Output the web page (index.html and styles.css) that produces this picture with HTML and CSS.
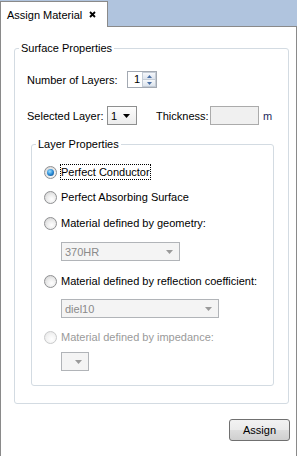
FILE: index.html
```html
<!DOCTYPE html>
<html lang="en">
<head>
    <meta charset="UTF-8">
    <meta name="viewport" content="width=device-width, initial-scale=1.0">
    <title>Assign Material</title>
    <link rel="stylesheet" href="styles.css">
</head>

<body>
    <div class="tabbar">
        <div class="tab">
            <span class="tab-title">Assign Material</span>
            <svg class="tab-close" width="7" height="7" viewBox="0 0 7 7">
                <path d="M1 1L6 6M6 1L1 6" stroke="#000" stroke-width="1.8" />
            </svg>
        </div>
        <div class="tabrest"></div>
    </div>

    <div class="panel">
        <fieldset class="group outer">
            <legend>Surface Properties</legend>

            <div class="row row-layers">
                <label class="lbl-layers">Number of Layers:</label>
                <div class="spinner">
                    <span class="spin-value">1</span>
                    <div class="spin-btns">
                        <span class="spin-btn">
                            <svg width="5" height="3" viewBox="0 0 5 3"><path d="M0 3L2.5 0L5 3Z" fill="#4a6fa5" /></svg>
                        </span>
                        <span class="spin-btn">
                            <svg width="5" height="3" viewBox="0 0 5 3"><path d="M0 0L2.5 3L5 0Z" fill="#4a6fa5" /></svg>
                        </span>
                    </div>
                </div>
            </div>

            <div class="row row-selected">
                <label class="lbl-selected">Selected Layer:</label>
                <div class="combo combo-layer">
                    <span>1</span>
                    <svg width="7" height="4" viewBox="0 0 7 4"><path d="M0 0L3.5 4L7 0Z" fill="#000" /></svg>
                </div>
                <label class="lbl-thick">Thickness:</label>
                <div class="textbox"></div>
                <span class="unit">m</span>
            </div>

            <fieldset class="group inner">
                <legend>Layer Properties</legend>

                <div class="option opt-first">
                    <span class="radio checked"></span>
                    <span class="opt-text focused">Perfect Conductor</span>
                </div>
                <div class="option opt-second">
                    <span class="radio"></span>
                    <span class="opt-text">Perfect Absorbing Surface</span>
                </div>
                <div class="option opt-third">
                    <span class="radio"></span>
                    <span class="opt-text">Material defined by geometry:</span>
                </div>
                <div class="combo disabled combo-geometry">
                    <span>370HR</span>
                    <svg width="7" height="4" viewBox="0 0 7 4"><path d="M0 0L3.5 4L7 0Z" fill="#9a9a9a" /></svg>
                </div>
                <div class="option opt-fourth">
                    <span class="radio"></span>
                    <span class="opt-text">Material defined by reflection coefficient:</span>
                </div>
                <div class="combo disabled combo-reflection">
                    <span>diel10</span>
                    <svg width="7" height="4" viewBox="0 0 7 4"><path d="M0 0L3.5 4L7 0Z" fill="#9a9a9a" /></svg>
                </div>
                <div class="option opt-fifth">
                    <span class="radio off"></span>
                    <span class="opt-text muted">Material defined by impedance:</span>
                </div>
                <div class="combo disabled combo-impedance">
                    <span></span>
                    <svg width="7" height="4" viewBox="0 0 7 4"><path d="M0 0L3.5 4L7 0Z" fill="#9a9a9a" /></svg>
                </div>
            </fieldset>
        </fieldset>

        <div class="actions">
            <button class="assign">Assign</button>
        </div>
    </div>
</body>

</html>
```

FILE: styles.css
```css
    body {
        margin: 0;
        width: 297px;
        height: 456px;
        overflow: hidden;
        background: #fff;
        font-family: 'Liberation Sans', Arial, sans-serif;
        font-size: 11px;
        color: #000;
    }

    /* tab strip */
    .tabbar {
        display: flex;
        height: 27px;
        background-color: #b0c4de;
    }

    .tab {
        display: flex;
        align-items: center;
        box-sizing: border-box;
        width: 108px;
        height: 26px;
        margin-top: 1px;
        padding: 0 11px 0 6px;
        border: 1px solid #8a8a8a;
        border-bottom: none;
        background-color: #fff;
    }

    .tab-title {
        line-height: 14px;
    }

    .tab-close {
        margin-left: auto;
    }

    .tabrest {
        flex: 1;
        border-bottom: 1px solid #8a8a8a;
    }

    /* page body */
    .panel {
        box-sizing: border-box;
        height: 429px;
        border-left: 1px solid #8a8a8a;
        border-right: 1px solid #8a8a8a;
        overflow: hidden;
    }

    .group {
        box-sizing: border-box;
        min-inline-size: 0;
        margin: 0;
        padding: 0;
        border: 1px solid #d3dbe2;
        border-radius: 3px;
    }

    .group legend {
        margin-left: 4px;
        padding: 0 2px;
        line-height: 13px;
    }

    .outer {
        width: 275px;
        margin: 15px 0 0 13px;
        padding-bottom: 17px;
    }

    .inner {
        width: 243px;
        margin: 13px 0 0 16px;
        padding-bottom: 14px;
    }

    .row {
        display: flex;
        align-items: center;
        padding-left: 12px;
    }

    .row-layers {
        height: 17px;
        margin-top: 16px;
    }

    .row-selected {
        height: 19px;
        margin-top: 18px;
    }

    .lbl-layers {
        width: 100px;
    }

    .lbl-selected {
        width: 80px;
    }

    .lbl-thick {
        width: 54px;
        margin-left: 19px;
    }

    /* spin box */
    .spinner {
        display: flex;
        box-sizing: border-box;
        width: 30px;
        height: 17px;
        border: 1px solid #a3a9b2;
        background: #fff;
    }

    .spin-value {
        flex: 1;
        text-align: right;
        padding-right: 2px;
        line-height: 15px;
    }

    .spin-btns {
        display: flex;
        flex-direction: column;
        width: 14px;
    }

    .spin-btn {
        display: flex;
        align-items: center;
        justify-content: center;
        flex: 1;
        box-sizing: border-box;
        border: 1px solid #c4ccd6;
        background: linear-gradient(#f6f8fb, #dce3ec);
    }

    .spin-btn + .spin-btn {
        border-top: none;
    }

    /* combo boxes */
    .combo {
        display: flex;
        align-items: center;
        justify-content: space-between;
        box-sizing: border-box;
        height: 19px;
        padding: 0 6px 0 3px;
        border: 1px solid #8e8f8f;
        background: linear-gradient(#fdfdfd, #ececec);
    }

    .combo-layer {
        width: 30px;
        padding-left: 3px;
    }

    .combo.disabled {
        margin-left: 29px;
        border-color: #b1b4b8;
        background: #f4f4f4;
        color: #8a8a8a;
    }

    .combo-geometry {
        width: 119px;
        margin-top: 11px;
    }

    .combo-reflection {
        width: 158px;
        margin-top: 10px;
    }

    .combo-impedance {
        width: 28px;
        margin-top: 7px;
    }

    .textbox {
        box-sizing: border-box;
        width: 49px;
        height: 19px;
        border: 1px solid #ababab;
        background-color: #f0f0f0;
    }

    .unit {
        margin-left: 4px;
        color: #1d2a5c;
    }

    /* radio options */
    .option {
        display: flex;
        align-items: center;
        height: 16px;
        padding-left: 12px;
    }

    .opt-first {
        margin-top: 13px;
    }

    .opt-second {
        margin-top: 9px;
    }

    .opt-third {
        margin-top: 10px;
    }

    .opt-fourth {
        margin-top: 12px;
    }

    .opt-fifth {
        margin-top: 11px;
    }

    .radio {
        display: flex;
        align-items: center;
        justify-content: center;
        box-sizing: border-box;
        width: 13px;
        height: 13px;
        border: 1px solid #8f9092;
        border-radius: 50%;
        background: radial-gradient(circle at 60% 65%, #ffffff 0, #ececec 45%, #cdcdcd 100%);
    }

    .radio.checked::after {
        content: '';
        width: 7px;
        height: 7px;
        border-radius: 50%;
        background: radial-gradient(circle at 40% 35%, #9fe0ff 0, #2a8bd6 50%, #0d3f78 100%);
    }

    .radio.off {
        border-color: #c9cacb;
        background: radial-gradient(circle at 60% 65%, #ffffff 0, #f3f3f3 50%, #e2e2e2 100%);
    }

    .opt-text {
        margin-left: 4px;
        line-height: 14px;
    }

    .opt-text.focused {
        margin-left: 3px;
        border: 1px dotted #000;
    }

    .opt-text.muted {
        color: #9a9a9a;
    }

    /* footer */
    .actions {
        display: flex;
        justify-content: flex-end;
        margin-top: 15px;
        padding-right: 6px;
    }

    .assign {
        width: 61px;
        height: 22px;
        padding: 0;
        border: 1px solid #707070;
        border-radius: 3px;
        background: linear-gradient(#f2f2f2 0%, #ebebeb 48%, #dddddd 52%, #cfcfcf 100%);
        font-family: 'Liberation Sans', Arial, sans-serif;
        font-size: 11px;
        color: #000;
    }
```
